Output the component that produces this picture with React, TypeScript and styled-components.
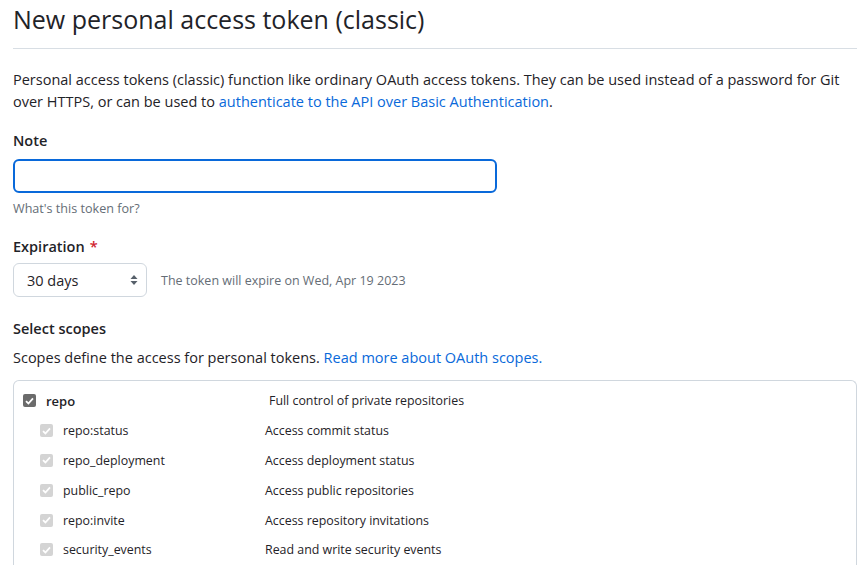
import React from "react";
import styled, { createGlobalStyle } from "styled-components";

const Global = createGlobalStyle`
  html, body { margin: 0; padding: 0; background: #ffffff; }
  body {
    font-family: "Open Sans", "Noto Sans", sans-serif;
    color: #1f2328;
    font-size: 14.5px;
  }
  * { box-sizing: border-box; }
`;

const Page = styled.div`
  padding: 0 4px 0 13px;
  width: 861px;
`;

const Header = styled.div`
  padding-top: 4px;
  padding-bottom: 14px;
  border-bottom: 1px solid #d8dee4;
`;

const Title = styled.h1`
  margin: 0;
  font-size: 25px;
  font-weight: 400;
  line-height: 30px;
  color: #1f2328;
`;

const Intro = styled.p`
  margin: 20px 0 0;
  font-size: 14.5px;
  line-height: 22px;
`;

const Link = styled.a`
  color: #0969da;
  text-decoration: none;
`;

const Label = styled.div<{ $gap?: number }>`
  margin-top: ${(p) => p.$gap ?? 17}px;
  font-size: 14.5px;
  font-weight: 600;
  line-height: 21px;
`;

const Required = styled.span`
  color: #cf222e;
  margin-left: 5px;
`;

const TextInput = styled.input`
  display: block;
  margin-top: 8px;
  width: 484px;
  height: 34px;
  border: 2px solid #0969da;
  border-radius: 6px;
  outline: none;
  background: #ffffff;
  font: inherit;
`;

const Hint = styled.div`
  margin-top: 7px;
  font-size: 12.6px;
  line-height: 18px;
  color: #656d76;
`;

const ExpireRow = styled.div`
  margin-top: 6px;
  display: flex;
  align-items: center;
  gap: 14px;
`;

const SelectBox = styled.div`
  width: 134px;
  height: 34px;
  border: 1px solid #d0d7de;
  border-radius: 6px;
  display: flex;
  align-items: center;
  justify-content: space-between;
  padding: 0 8px 0 13px;
  font-size: 14.5px;
  background: #ffffff;
`;

const ExpireNote = styled.span`
  font-size: 12.5px;
  color: #656d76;
`;

const Desc = styled.p`
  margin: 8px 0 0;
  font-size: 14.5px;
  line-height: 22px;
`;

const ScopeBox = styled.div`
  margin-top: 11px;
  border: 1px solid #d0d7de;
  border-bottom: none;
  border-radius: 6px 6px 0 0;
  padding: 5px 0 0 9px;
`;

const Row = styled.div<{ $sub?: boolean }>`
  display: grid;
  grid-template-columns: ${(p) => (p.$sub ? "225px" : "242px")} 1fr;
  margin-left: ${(p) => (p.$sub ? 17 : 0)}px;
  height: 29.8px;
  align-items: center;
  font-size: 12.4px;
`;

const NameCell = styled.div`
  display: flex;
  align-items: center;
  gap: 10px;
`;

const Check = styled.span<{ $disabled?: boolean }>`
  width: 13px;
  height: 13px;
  border-radius: 2px;
  background: ${(p) => (p.$disabled ? "#d4d4d4" : "#6b6b6b")};
  display: inline-flex;
  align-items: center;
  justify-content: center;
  flex: none;
`;

const Name = styled.span<{ $bold?: boolean }>`
  font-weight: ${(p) => (p.$bold ? 600 : 400)};
  font-size: ${(p) => (p.$bold ? 13 : 12.4)}px;
  color: #1f2328;
`;

const ScopeDesc = styled.span<{ $main?: boolean }>`
  padding-left: ${(p) => (p.$main ? 4 : 0)}px;
  color: #1f2328;
`;

const CheckMark = () => (
  <svg width="9" height="8" viewBox="0 0 9 8">
    <path d="M1 4.2 L3.4 6.5 L8 1.4" fill="none" stroke="#fff" strokeWidth="1.8" />
  </svg>
);

const SelectArrows = () => (
  <svg width="8" height="12" viewBox="0 0 8 12">
    <path d="M4 1 L7.5 5 L0.5 5 Z" fill="#57606a" />
    <path d="M4 11 L7.5 7 L0.5 7 Z" fill="#57606a" />
  </svg>
);

const scopes = [
  ["repo:status", "Access commit status"],
  ["repo_deployment", "Access deployment status"],
  ["public_repo", "Access public repositories"],
  ["repo:invite", "Access repository invitations"],
  ["security_events", "Read and write security events"],
];

export default function App() {
  return (
    <Page>
      <Global />
      <Header>
        <Title>New personal access token (classic)</Title>
      </Header>
      <Intro>
        Personal access tokens (classic) function like ordinary OAuth access tokens. They can be used instead of a
        password for Git over HTTPS, or can be used to{" "}
        <Link href="#">authenticate to the API over Basic Authentication</Link>.
      </Intro>
      <Label>Note</Label>
      <TextInput />
      <Hint>What's this token for?</Hint>
      <Label $gap={18}>
        Expiration<Required>*</Required>
      </Label>
      <ExpireRow>
        <SelectBox>
          <span>30 days</span>
          <SelectArrows />
        </SelectBox>
        <ExpireNote>The token will expire on Wed, Apr 19 2023</ExpireNote>
      </ExpireRow>
      <Label $gap={21}>Select scopes</Label>
      <Desc>
        Scopes define the access for personal tokens. <Link href="#">Read more about OAuth scopes.</Link>
      </Desc>
      <ScopeBox>
        <Row>
          <NameCell>
            <Check>
              <CheckMark />
            </Check>
            <Name $bold>repo</Name>
          </NameCell>
          <ScopeDesc $main>Full control of private repositories</ScopeDesc>
        </Row>
        {scopes.map(([n, d]) => (
          <Row $sub key={n}>
            <NameCell>
              <Check $disabled>
                <CheckMark />
              </Check>
              <Name>{n}</Name>
            </NameCell>
            <ScopeDesc>{d}</ScopeDesc>
          </Row>
        ))}
      </ScopeBox>
    </Page>
  );
}
